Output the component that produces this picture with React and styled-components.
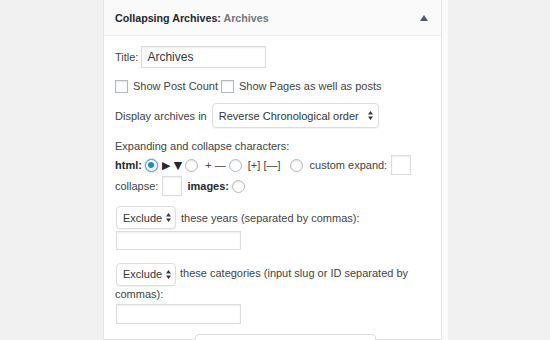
import React from "react";
import styled, { createGlobalStyle } from "styled-components";

const GlobalStyle = createGlobalStyle`
  html, body { margin: 0; padding: 0; }
  body {
    background: #f1f1f1;
    font-family: "Liberation Sans", Arial, sans-serif;
    font-size: 11px;
    color: #444;
    overflow: hidden;
  }
`;

const Page = styled.div`
  display: flex;
  align-items: stretch;
  height: 340px;
  padding-left: 103px;
  overflow: hidden;
`;

const Widget = styled.div`
  width: 337px;
  background: #fff;
  border: 1px solid #e5e5e5;
  border-top: none;
`;

const Gutter = styled.div`
  width: 6px;
  background: #fbfbfb;
`;

const Header = styled.div`
  height: 35px;
  display: flex;
  align-items: center;
  justify-content: space-between;
  padding: 0 13px 0 11px;
  background: #fafafa;
  border-bottom: 1px solid #eee;
`;

const HeaderTitle = styled.h3`
  margin: 0;
  font-size: 10.7px;
  font-weight: 700;
  color: #23282d;
`;

const InWidget = styled.span`
  color: #72777c;
`;

const Toggle = styled.svg`
  width: 8px;
  height: 6px;
  fill: #555d66;
`;

const Body = styled.div`
  padding: 10px 11px 0 11px;
`;

const Row = styled.div`
  display: flex;
  align-items: center;
  height: ${(p) => p.h}px;
  margin-top: ${(p) => p.mt || 0}px;
  white-space: nowrap;
`;

const Label = styled.span`
  margin-left: ${(p) => p.ml || 0}px;
  font-weight: ${(p) => (p.bold ? 700 : 400)};
  color: ${(p) => (p.bold ? "#23282d" : "#444")};
`;

const Glyphs = styled.span`
  margin-left: ${(p) => p.ml || 0}px;
  font-family: "DejaVu Sans", sans-serif;
  font-size: 11px;
  color: #23282d;
`;

const TextInput = styled.div`
  box-sizing: border-box;
  width: ${(p) => p.w}px;
  height: ${(p) => p.h}px;
  margin-left: ${(p) => p.ml || 0}px;
  padding: 0 5px;
  display: flex;
  align-items: center;
  border: 1px solid #ddd;
  box-shadow: inset 0 1px 2px rgba(0, 0, 0, 0.07);
  background: #fff;
  font-size: 12px;
  color: #32373c;
`;

const Check = styled.span`
  box-sizing: border-box;
  width: 13px;
  height: 13px;
  margin-left: ${(p) => p.ml || 0}px;
  border: 1px solid #b4b9be;
  background: #fff;
  box-shadow: inset 0 1px 2px rgba(0, 0, 0, 0.1);
  flex: none;
`;

const Radio = styled.span`
  box-sizing: border-box;
  width: 13px;
  height: 13px;
  margin-left: ${(p) => p.ml || 0}px;
  border-radius: 50%;
  border: 1px solid ${(p) => (p.checked ? "#5b9dd9" : "#b4b9be")};
  box-shadow: ${(p) =>
    p.checked ? "0 0 2px rgba(30, 140, 190, 0.8)" : "inset 0 1px 2px rgba(0, 0, 0, 0.1)"};
  background: #fff;
  display: flex;
  align-items: center;
  justify-content: center;
  flex: none;
  &::after {
    content: "";
    display: ${(p) => (p.checked ? "block" : "none")};
    width: 6px;
    height: 6px;
    border-radius: 50%;
    background: #1e8cbe;
  }
`;

const SelectBox = styled.span`
  box-sizing: border-box;
  display: inline-flex;
  align-items: center;
  justify-content: space-between;
  width: ${(p) => p.w}px;
  height: ${(p) => p.h}px;
  margin-left: ${(p) => p.ml || 0}px;
  padding: 0 5px 0 6px;
  border: 1px solid #ddd;
  border-radius: 4px;
  box-shadow: 0 1px 1px rgba(0, 0, 0, 0.05);
  background: #fff;
  font-size: 11px;
  color: #32373c;
  white-space: nowrap;
  vertical-align: middle;
  flex: none;
`;

const Arrows = styled.svg`
  width: 5px;
  height: 9px;
  margin-left: 4px;
  fill: #32373c;
  flex: none;
`;

const Wrapped = styled.p`
  margin: 13px 0 0;
  line-height: 20px;
  & > ${SelectBox} {
    margin: -2px 4px -2px 1px;
  }
`;

const Block = styled.div`
  margin-top: ${(p) => p.mt || 0}px;
  padding-left: ${(p) => p.pl || 0}px;
`;

function Select({ w, h, ml, children }) {
  return (
    <SelectBox w={w} h={h} ml={ml}>
      {children}
      <Arrows viewBox="0 0 5 9">
        <path d="M2.5 0 L5 3.5 L0 3.5 Z M0 5.5 L5 5.5 L2.5 9 Z" />
      </Arrows>
    </SelectBox>
  );
}

export default function App() {
  return (
    <>
      <GlobalStyle />
      <Page>
        <Widget>
          <Header>
            <HeaderTitle>
              Collapsing Archives:<InWidget> Archives</InWidget>
            </HeaderTitle>
            <Toggle viewBox="0 0 8 6">
              <path d="M4 0 L8 6 L0 6 Z" />
            </Toggle>
          </Header>
          <Body>
            <Row h={22}>
              <Label>Title:</Label>
              <TextInput w={125} h={22} ml={3}>Archives</TextInput>
            </Row>
            <Row h={16} mt={10}>
              <Check />
              <Label ml={5}>Show Post Count</Label>
              <Check ml={3} />
              <Label ml={5}>Show Pages as well as posts</Label>
            </Row>
            <Row h={25} mt={9}>
              <Label>Display archives in</Label>
              <Select w={167} h={25} ml={5}>Reverse Chronological order</Select>
            </Row>
            <Row h={16} mt={10}>
              <Label>Expanding and collapse characters:</Label>
            </Row>
            <Row h={20} mt={1}>
              <Label bold>html:</Label>
              <Radio checked ml={3} />
              <Glyphs ml={4}>▶ ▼</Glyphs>
              <Radio ml={3} />
              <Label ml={7}>+ —</Label>
              <Radio ml={3} />
              <Label ml={6}>[+] [—]</Label>
              <Radio ml={9} />
              <Label ml={7}>custom expand:</Label>
              <TextInput w={20} h={20} ml={4} />
            </Row>
            <Row h={20} mt={1}>
              <Label>collapse:</Label>
              <TextInput w={20} h={20} ml={4} />
              <Label bold ml={5}>images:</Label>
              <Radio ml={3} />
            </Row>
            <Row h={23} mt={10}>
              <Select w={60} h={23} ml={1}>Exclude</Select>
              <Label ml={5}>these years (separated by commas):</Label>
            </Row>
            <Block mt={2} pl={1}>
              <TextInput w={125} h={19} />
            </Block>
            <Wrapped>
              <Select w={60} h={23}>Exclude</Select>
              these categories (input slug or ID separated by commas):
            </Wrapped>
            <Block mt={0} pl={1}>
              <TextInput w={125} h={20} />
            </Block>
            <Row h={25} mt={10}>
              <Label>Tree order by:</Label>
              <Select w={181} h={25} ml={11}>Archive list of Title</Select>
            </Row>
          </Body>
        </Widget>
        <Gutter />
      </Page>
    </>
  );
}
